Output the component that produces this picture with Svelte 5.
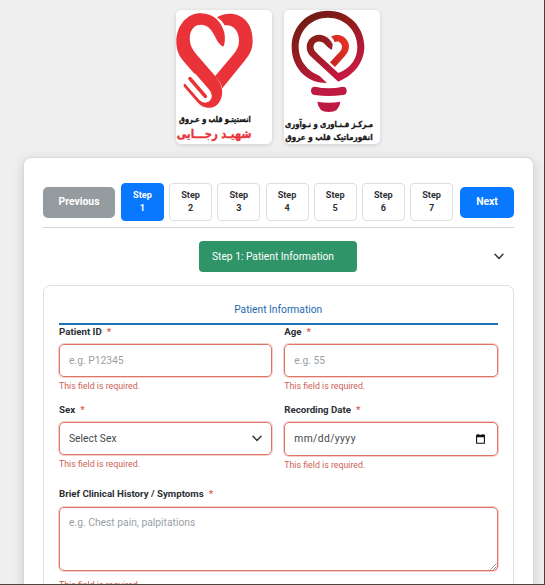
<script>
  const steps = [1, 2, 3, 4, 5, 6, 7];
  let active = $state(1);
</script>

{#snippet label(text)}
  <span class="label">{text}<span class="star">*</span></span>
{/snippet}

{#snippet chevron()}
  <svg class="chevron" width="10" height="7" viewBox="0 0 10 7"><path d="M1 1.2 5 5.4 9 1.2" fill="none" stroke="#343a40" stroke-width="1.5" stroke-linecap="round" stroke-linejoin="round" /></svg>
{/snippet}

<div class="page">
  <header class="logos">
    <div class="logo">
      <svg viewBox="18 30 288 402" width="96" height="134">
        <path fill="#e93338" d="M141 52C160 40 185 38 207 47C235 59 248 88 248 124C248 148 239 164 224 182L157 265C154 251 147 240 135 229L193 160C205 145 209 130 206 112C203 88 187 72 164 76C159 66 151 58 141 52Z" />
        <path fill="#e93338" d="M160 140C145 132 140 119 132 104C120 80 102 69 82 76C64 83 57 103 60 124C62 142 72 155 86 171L135 227C151 245 159 261 156 284C152 311 133 326 111 323C96 321 88 313 79 303L42 260C38 254 45 247 50 252L88 297C99 310 116 310 122 297C127 286 122 278 114 268L40 183C26 166 19 148 19 126C19 82 45 45 85 40C126 36 154 62 163 98C166 114 165 130 160 140Z" />
        <path d="M46 247 90 297Q106 311 118 298Q127 286 114 270L72 222" fill="none" stroke="#fff" stroke-width="7" />
        <path d="M60 236 106 289" fill="none" stroke="#e93338" stroke-width="11" stroke-linecap="round" />
        <path d="M53 247 96 295" fill="none" stroke="#fff" stroke-width="3" />
        <text x="242" y="365" direction="rtl" textLength="215" lengthAdjust="spacingAndGlyphs" font-size="25" fill="#111" stroke="#111">انستیتـو قلب و عـروق</text>
        <text x="244" y="414" direction="rtl" textLength="224" lengthAdjust="spacingAndGlyphs" font-size="37" fill="#e93338" stroke="#e93338">شهیـد رجـــایی</text>
      </svg>
    </div>
    <div class="logo">
      <svg viewBox="28 30 288 402" width="96" height="134">
        <defs>
          <linearGradient id="ring" x1="0" y1="0" x2=".55" y2="1">
            <stop offset="0" stop-color="#651a14" />
            <stop offset=".42" stop-color="#8b1d1a" />
            <stop offset="1" stop-color="#c71943" />
          </linearGradient>
          <linearGradient id="lobe" x1="1" y1="0" x2="0" y2="1">
            <stop offset="0" stop-color="#ed3325" />
            <stop offset="1" stop-color="#c32320" />
          </linearGradient>
        </defs>
        <path fill="url(#ring)" d="M157 249C94 250 51 201 51 141C51 79 98 32 160 32C222 32 269 80 269 141C269 184 240 225 191 245L108 169C91 152 93 126 109 113C132 95 161 106 174 132L172 149C157 145 154 132 143 127C128 119 114 130 117 145C119 154 125 158 132 165L191 219C229 205 248 176 248 141C248 91 210 53 160 53C110 53 72 91 72 141C72 183 101 215 134 227Z" />
        <path fill="url(#lobe)" d="M169 110C188 99 211 107 220 126C227 143 221 157 208 171L181 201L166 187L194 157C203 148 205 137 197 129C192 123 185 124 180 127C178 120 175 115 169 110Z" />
        <path fill="#be1941" d="M121 260Q162 269 204 260Q216 260 216 273Q216 285 204 285Q162 291 121 285Q109 284 109 272Q109 260 121 260ZM128 305Q162 311 197 305Q194 336 162 336Q131 336 128 305Z" />
        <text x="295" y="380" direction="rtl" textLength="264" lengthAdjust="spacingAndGlyphs" font-size="25" fill="#181818" stroke="#181818">مـرکـز فـنـاوری و نـوآوری</text>
        <text x="294" y="421" direction="rtl" textLength="262" lengthAdjust="spacingAndGlyphs" font-size="25" fill="#181818" stroke="#181818">انفورماتیک قلب و عروق</text>
      </svg>
    </div>
  </header>

  <main class="panel">
    <nav class="nav">
      <button class="move prev">Previous</button>
      <div class="steps">
        {#each steps as n}
          <button class="step" class:active={n === active} onclick={() => (active = n)}>Step<br />{n}</button>
        {/each}
      </div>
      <button class="move next">Next</button>
    </nav>

    <div class="heading">
      <span></span>
      <h1>Step 1: Patient Information</h1>
      {@render chevron()}
    </div>

    <section class="card">
      <h2>Patient Information</h2>
      <div class="grid">
        <div class="field">
          {@render label('Patient ID')}
          <div class="box muted">e.g. P12345</div>
          <span class="error">This field is required.</span>
        </div>
        <div class="field">
          {@render label('Age')}
          <div class="box muted">e.g. 55</div>
          <span class="error">This field is required.</span>
        </div>
        <div class="field">
          {@render label('Sex')}
          <div class="box select">Select Sex {@render chevron()}</div>
          <span class="error">This field is required.</span>
        </div>
        <div class="field">
          {@render label('Recording Date')}
          <div class="box date"><span class="mask">mm/dd/yyyy</span>
            <svg width="9" height="10" viewBox="0 0 9 10"><path d="M.6 1.4H8.4V9.2H.6Z" fill="none" stroke="#111" stroke-width="1.1" /><path d="M0 .9H9V3.3H0ZM1.5 0H2.7V1H1.5ZM6.3 0H7.5V1H6.3Z" fill="#111" /></svg>
          </div>
          <span class="error">This field is required.</span>
        </div>
      </div>
      <div class="field history">
        {@render label('Brief Clinical History / Symptoms')}
        <div class="box area muted">e.g. Chest pain, palpitations
          <svg class="grip" width="7" height="7" viewBox="0 0 7 7"><path d="M.5 6.5 6.5.5M3.5 6.5 6.5 3.5" stroke="#777" stroke-width=".8" /></svg>
        </div>
        <span class="error">This field is required.</span>
      </div>
    </section>
  </main>
</div>

<style>
  :global(body) {
    overflow: hidden;
  }
  .page {
    box-sizing: border-box;
    width: 545px;
    height: 585px;
    overflow: hidden;
    padding: 10px 11px 0 23px;
    background: #efefef;
    border-right: 1px solid #444;
    border-bottom: 1px solid #444;
    font-family: Roboto, "Liberation Sans", sans-serif;
    font-size: 10.3px;
    color: #343a40;
  }
  .logos {
    display: flex;
    justify-content: center;
    gap: 12.5px;
    height: 147px;
  }
  .logo {
    width: 96px;
    height: 134px;
    background: #fff;
    border-radius: 5px;
    box-shadow: 0 1px 4px rgba(0, 0, 0, 0.14);
  }
  .logo svg {
    display: block;
    overflow: visible;
  }
  .logo text {
    font-family: "DejaVu Sans", sans-serif;
    font-weight: 700;
  }
  .panel {
    box-sizing: border-box;
    width: 511px;
    height: 500px;
    padding: 25px 19px 0;
    background: #fff;
    border: 1px solid #d9d9d9;
    border-radius: 8px;
    box-shadow: 0 3px 12px rgba(0, 0, 0, 0.14);
  }
  .nav {
    display: flex;
    align-items: center;
    justify-content: space-between;
    box-sizing: border-box;
    height: 45px;
    padding-bottom: 6px;
    border-bottom: 1px solid #d6d8da;
  }
  button {
    font-family: inherit;
    font-weight: 700;
    padding: 0;
    border: 0;
  }
  .move {
    height: 31px;
    padding-bottom: 1px;
    border-radius: 5px;
    color: #fff;
    font-size: 10.4px;
  }
  .prev {
    width: 72px;
    background: #959c9f;
  }
  .next {
    width: 54px;
    background: #0878ff;
  }
  .steps {
    display: flex;
    gap: 5.2px;
    margin-right: 1px;
  }
  .step {
    box-sizing: border-box;
    width: 43px;
    height: 38px;
    border: 1px solid #dcdee0;
    border-radius: 4px;
    background: #fff;
    color: #303337;
    font-size: 9.1px;
    line-height: 12.6px;
  }
  .step.active {
    background: #0878ff;
    border-color: #0878ff;
    color: #fff;
  }
  .heading {
    display: grid;
    grid-template-columns: 1fr 158px 1fr;
    align-items: center;
    margin-top: 13px;
    height: 31px;
  }
  .heading .chevron {
    justify-self: end;
    margin-right: 10px;
  }
  h1 {
    box-sizing: border-box;
    margin: 0 0.5px 0 -0.5px;
    height: 31px;
    padding-left: 13px;
    border-radius: 4px;
    background: #2f9468;
    color: #fff;
    font-size: 10.25px;
    font-weight: 400;
    line-height: 31px;
    white-space: nowrap;
  }
  .card {
    box-sizing: border-box;
    height: 400px;
    margin-top: 13px;
    padding: 14px 15.5px 0 15px;
    border: 1px solid #dcdee0;
    border-radius: 7px;
  }
  h2 {
    margin: 0;
    height: 23px;
    border-bottom: 2px solid #1c70b9;
    color: #1f69ae;
    font-size: 10.25px;
    font-weight: 400;
    line-height: 19px;
    text-align: center;
  }
  .grid {
    display: grid;
    grid-template-columns: 1fr 1fr;
    column-gap: 12px;
    grid-template-rows: 78px 84px;
  }
  .field {
    display: flex;
    flex-direction: column;
  }
  .label {
    height: 19px;
    line-height: 14px;
    font-size: 9.7px;
    font-weight: 700;
    color: #2b3035;
  }
  .star {
    margin-left: 5px;
    color: #e05a50;
  }
  .box {
    box-sizing: border-box;
    display: flex;
    justify-content: space-between;
    align-items: center;
    height: 33px;
    padding: 0 9px;
    border: 1.5px solid #df7468;
    border-radius: 5px;
    box-shadow: 0 0 0 1px rgba(225, 120, 105, 0.35);
    font-size: 10.3px;
    color: #43494e;
  }
  .muted {
    color: #9a9fa7;
  }
  .select {
    height: 32.5px;
  }
  .date {
    height: 33.5px;
    padding-right: 12px;
  }
  .mask {
    letter-spacing: 0.4px;
  }
  .area {
    position: relative;
    height: 64px;
    margin-top: 0.5px;
    align-items: flex-start;
    padding-top: 8.5px;
  }
  .grip {
    position: absolute;
    right: 0;
    bottom: 0;
  }
  .error {
    margin-top: 3px;
    font-size: 8.8px;
    line-height: 13px;
    color: #cd6155;
  }
  .history .error {
    margin-top: 8px;
  }
</style>
